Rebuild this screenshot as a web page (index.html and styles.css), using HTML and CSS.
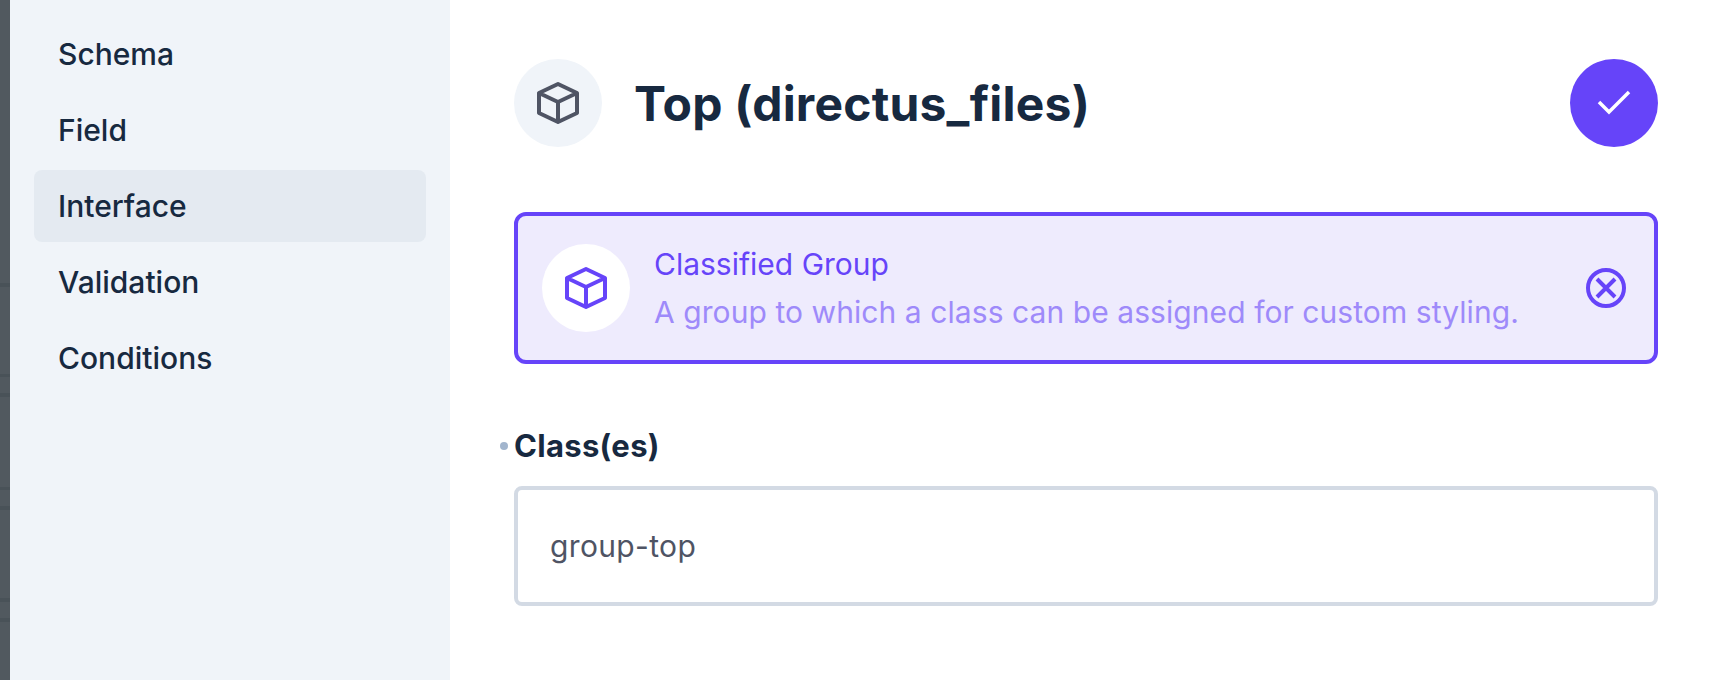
FILE: index.html
```html
<!DOCTYPE html>
<html lang="en">
<head>
  <meta charset="UTF-8">
  <title>Top (directus_files)</title>
  <link rel="stylesheet" href="styles.css">
</head>
<body>
  <!-- Backdrop edge -->
  <div class="backdrop"></div>

  <!-- Sidebar -->
  <nav class="side-nav">
    <a class="nav-item">Schema</a>
    <a class="nav-item">Field</a>
    <a class="nav-item active">Interface</a>
    <a class="nav-item">Validation</a>
    <a class="nav-item">Conditions</a>
  </nav>

  <!-- Main Content -->
  <main class="main">
    <div class="header">
      <div class="header-icon">
        <svg width="48" height="48" viewBox="0 0 48 48" class="cube">
          <path d="M24 5 43 14V34L24 43 5 34V14ZM5 14 24 23 43 14M24 23V43"/>
        </svg>
      </div>
      <h1>Top (directus_files)</h1>
      <button class="save-button" aria-label="Save">
        <svg width="48" height="48" viewBox="0 0 48 48" class="check">
          <path d="M9 23 19 33 39 13"/>
        </svg>
      </button>
    </div>

    <div class="selected-card">
      <div class="card-icon">
        <svg width="48" height="48" viewBox="0 0 48 48" class="cube">
          <path d="M24 5 43 14V34L24 43 5 34V14ZM5 14 24 23 43 14M24 23V43"/>
        </svg>
      </div>
      <div class="card-text">
        <div class="card-title">Classified Group</div>
        <div class="card-desc">A group to which a class can be assigned for custom styling.</div>
      </div>
      <svg width="48" height="48" viewBox="0 0 48 48" class="close-icon">
        <circle cx="24" cy="24" r="18"/>
        <path d="M15 15 33 33M33 15 15 33"/>
      </svg>
    </div>

    <div class="field">
      <label class="field-label">Class(es)</label>
      <div class="text-input">group-top</div>
    </div>
  </main>
</body>
</html>
```

FILE: styles.css
```css
/* General Reset */
* {
  margin: 0;
  padding: 0;
  box-sizing: border-box;
}

body {
  display: flex;
  height: 680px;
  overflow: hidden;
  font-family: Inter, 'Noto Sans', sans-serif;
  font-size: 30px;
  color: #172940;
  background-color: #fff;
}

/* Blurred page showing behind the drawer */
.backdrop {
  width: 10px;
  background-color: #51595f;
  background-image: linear-gradient(
    to bottom,
    transparent 283px, #495258 283px, #495258 287px, transparent 287px,
    transparent 374px, #495258 374px, #495258 377px, transparent 377px,
    transparent 393px, #495258 393px, #495258 397px, transparent 397px,
    transparent 487px, #495258 487px, #495258 490px, transparent 490px,
    transparent 506px, #495258 506px, #495258 510px, transparent 510px,
    transparent 598px, #495258 598px, #495258 602px, transparent 602px,
    transparent 618px, #495258 618px, #495258 622px, transparent 622px
  );
}

/* Sidebar */
.side-nav {
  width: 440px;
  padding: 18px 24px;
  display: flex;
  flex-direction: column;
  gap: 4px;
  background-color: #f0f4f9;
}

.nav-item {
  height: 72px;
  padding: 0 24px;
  display: flex;
  align-items: center;
  border-radius: 8px;
  font-weight: 500;
}

.nav-item.active {
  background-color: #e4eaf1;
}

/* Main Layout */
.main {
  flex: 1;
  padding: 59px 62px 0 64px;
}

.header {
  display: flex;
  align-items: center;
  height: 88px;
}

.header-icon {
  width: 88px;
  height: 88px;
  border-radius: 50%;
  background-color: #f0f4f9;
  display: flex;
  align-items: center;
  justify-content: center;
}

.cube path {
  fill: none;
  stroke: currentColor;
  stroke-width: 4;
  stroke-linejoin: round;
}

.header-icon .cube {
  color: #4f5464;
}

.header h1 {
  flex: 1;
  margin-left: 32px;
  font-size: 48px;
  font-weight: 700;
  letter-spacing: 0.2px;
}

.save-button {
  width: 88px;
  height: 88px;
  border: none;
  border-radius: 50%;
  background-color: #6644f9;
  display: flex;
  align-items: center;
  justify-content: center;
}

.check path {
  fill: none;
  stroke: #fff;
  stroke-width: 3.5;
}

/* Selected interface card */
.selected-card {
  margin-top: 65px;
  height: 152px;
  padding: 0 24px;
  display: flex;
  align-items: center;
  border: 4px solid #6644f9;
  border-radius: 12px;
  background-color: #eeebfd;
}

.card-icon {
  width: 88px;
  height: 88px;
  border-radius: 50%;
  background-color: #fff;
  display: flex;
  align-items: center;
  justify-content: center;
}

.card-icon .cube {
  color: #6644f9;
}

.card-text {
  flex: 1;
  margin-left: 24px;
  line-height: 48px;
}

.card-title {
  color: #6644f9;
}

.card-desc {
  color: #9e8afa;
  letter-spacing: 0.07px;
}

.close-icon circle,
.close-icon path {
  fill: none;
  stroke: #6644f9;
  stroke-width: 4;
}

/* Field */
.field {
  position: relative;
  margin-top: 62px;
}

.field-label {
  display: block;
  height: 40px;
  line-height: 40px;
  font-size: 31px;
  font-weight: 700;
  letter-spacing: 0.3px;
}

.field-label::before {
  content: "";
  position: absolute;
  left: -14px;
  top: 16px;
  width: 8px;
  height: 8px;
  border-radius: 50%;
  background-color: #a2b5cd;
}

.text-input {
  margin-top: 20px;
  height: 120px;
  padding: 0 32px;
  display: flex;
  align-items: center;
  border: 4px solid #d3dae4;
  border-radius: 8px;
  color: #4f5464;
  letter-spacing: 0.35px;
}
```
